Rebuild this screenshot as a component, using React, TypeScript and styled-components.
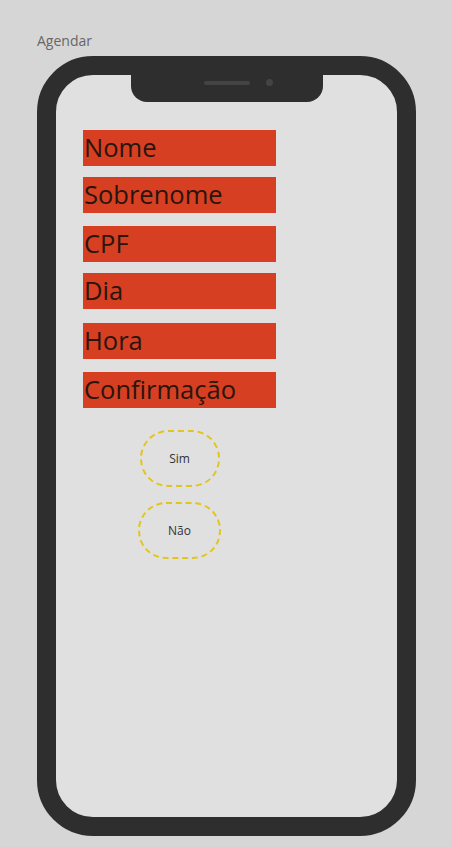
import React from 'react'
import styled, { createGlobalStyle } from 'styled-components'

const GlobalStyle = createGlobalStyle`
  body {
    margin: 0;
    background: #d6d6d6;
    font-family: 'Open Sans', 'Liberation Sans', sans-serif;
  }
`

const Page = styled.div`
  width: 451px;
  height: 847px;
  padding: 31px 0 0 37px;
  box-sizing: border-box;
`

const Title = styled.div`
  font-size: 14px;
  line-height: 20px;
  color: #666;
  height: 25px;
`

const Phone = styled.div`
  position: relative;
  width: 379px;
  height: 780px;
  box-sizing: border-box;
  border: 19px solid #2e2e2e;
  border-radius: 56px;
  background: #e0e0e0;
`

// notch sits over the screen top
const Notch = styled.div`
  position: absolute;
  top: -1px;
  left: 75px;
  width: 192px;
  height: 28px;
  box-sizing: border-box;
  padding: 0 0 11px 73px;
  display: flex;
  align-items: center;
  gap: 16px;
  background: #2e2e2e;
  border-radius: 0 0 16px 16px;
`

const Speaker = styled.div`
  width: 46px;
  height: 4px;
  border-radius: 2px;
  background: #444;
`

const Camera = styled.div`
  width: 7px;
  height: 7px;
  border-radius: 50%;
  background: #444;
`

const Form = styled.div`
  display: flex;
  flex-direction: column;
  align-items: center;
  width: 193px;
  padding: 55px 0 0 27px;
`

const Field = styled.div<{ $gap: number }>`
  width: 193px;
  height: 36px;
  margin-bottom: ${p => p.$gap}px;
  background: #d63f22;
  color: #2a150c;
  font-size: 25.5px;
  line-height: 35px;
  padding-left: 1px;
  box-sizing: border-box;
  white-space: nowrap;
`

const Choices = styled.div`
  display: flex;
  flex-direction: column;
  align-items: center;
  gap: 15px;
`

const Choice = styled.div<{ $width: number }>`
  display: flex;
  align-items: center;
  justify-content: center;
  width: ${p => p.$width}px;
  height: 57px;
  box-sizing: border-box;
  border: 2px dashed #e2c51c;
  border-radius: 28px;
  font-size: 12px;
  color: #333;
`

const fields: [string, number][] = [
  ['Nome', 11],
  ['Sobrenome', 13],
  ['CPF', 11],
  ['Dia', 14],
  ['Hora', 13],
  ['Confirmação', 22],
]

export default function App() {
  return (
    <Page>
      <GlobalStyle />
      <Title>Agendar</Title>
      <Phone>
        <Notch>
          <Speaker />
          <Camera />
        </Notch>
        <Form>
          {fields.map(([label, gap]) => (
            <Field key={label} $gap={gap}>{label}</Field>
          ))}
          <Choices>
            <Choice $width={80}>Sim</Choice>
            <Choice $width={83}>Não</Choice>
          </Choices>
        </Form>
      </Phone>
    </Page>
  )
}
